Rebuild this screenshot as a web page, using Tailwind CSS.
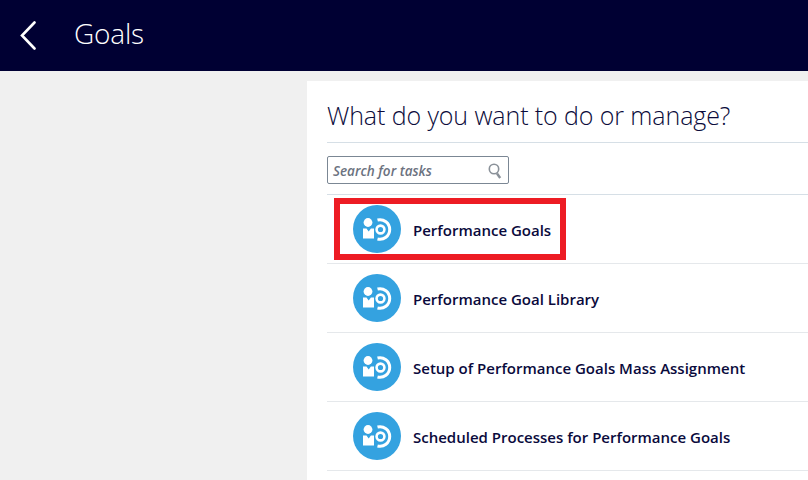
<!DOCTYPE html>
<html lang="en">
<head>
<meta charset="UTF-8">
<title>Goals</title>
<script src="https://cdn.jsdelivr.net/npm/@tailwindcss/browser@4"></script>
</head>
<body class="bg-[#f0f0f0] font-['Open_Sans',sans-serif] w-[808px] h-[480px] overflow-hidden">
  <header class="h-[71px] bg-[#000033] flex items-center text-white">
    <svg class="ml-[20px]" width="16" height="30" viewBox="0 0 16 30" fill="none" stroke="#fff" stroke-width="2.6" stroke-linecap="round"><path d="M14.5 1.5 2 14.5 14.5 27.5"/></svg>
    <h1 class="ml-[38px] mb-[6px] text-[28px] font-light tracking-[-0.2px]">Goals</h1>
  </header>
  <main class="ml-[307px] mt-[10px] bg-white h-[399px] pl-[20px]">
    <h2 class="h-[62px] border-b border-[#d6dfe6] pt-[16px] text-[25px] leading-[36px] font-light text-[#0b0b3b] tracking-[-0.1px]">What do you want to do or manage?</h2>
    <div class="h-[52px] border-b border-[#d6dfe6] pt-[13px]">
      <div class="w-[182px] h-[28px] border border-[#7b8794] rounded-[2px] bg-white flex items-center justify-between pl-[5px] pr-[6px]">
        <span class="mt-[3px] text-[13.5px] italic font-semibold text-[#6b7280]">Search for tasks</span>
        <svg class="mt-[2px]" width="14" height="17" viewBox="0 0 14 17" fill="none"><circle cx="6" cy="6" r="4.7" stroke="#8a9199" stroke-width="1.6"/><path d="M9 10.5l3.2 4.5" stroke="#8a9199" stroke-width="2.4"/></svg>
      </div>
    </div>
    <ul class="relative">
      <li class="h-[69px] border-b border-[#e5e8eb] flex items-center pl-[26px]">
        <svg width="48" height="48" viewBox="0 0 48 48"><circle cx="24" cy="24" r="24" fill="#34a2e0"/><circle cx="27.5" cy="24.5" r="3.9" fill="none" stroke="#fff" stroke-width="2.6"/><path d="M24.5 15a9.8 9.8 0 1 1 0 19" fill="none" stroke="#fff" stroke-width="3"/><circle cx="15" cy="17.5" r="4.4" fill="#fff"/><path d="M10 23.5h3.5l2.2 3 2.2-3H21v10H10z" fill="#fff"/></svg>
        <span class="ml-[12px] mt-[3px] text-[15px] font-semibold text-[#0a0a3c]">Performance Goals</span>
      </li>
      <li class="h-[69px] border-b border-[#e5e8eb] flex items-center pl-[26px]">
        <svg width="48" height="48" viewBox="0 0 48 48"><circle cx="24" cy="24" r="24" fill="#34a2e0"/><circle cx="27.5" cy="24.5" r="3.9" fill="none" stroke="#fff" stroke-width="2.6"/><path d="M24.5 15a9.8 9.8 0 1 1 0 19" fill="none" stroke="#fff" stroke-width="3"/><circle cx="15" cy="17.5" r="4.4" fill="#fff"/><path d="M10 23.5h3.5l2.2 3 2.2-3H21v10H10z" fill="#fff"/></svg>
        <span class="ml-[12px] mt-[3px] text-[15px] font-semibold text-[#0a0a3c]">Performance Goal Library</span>
      </li>
      <li class="h-[69px] border-b border-[#e5e8eb] flex items-center pl-[26px]">
        <svg width="48" height="48" viewBox="0 0 48 48"><circle cx="24" cy="24" r="24" fill="#34a2e0"/><circle cx="27.5" cy="24.5" r="3.9" fill="none" stroke="#fff" stroke-width="2.6"/><path d="M24.5 15a9.8 9.8 0 1 1 0 19" fill="none" stroke="#fff" stroke-width="3"/><circle cx="15" cy="17.5" r="4.4" fill="#fff"/><path d="M10 23.5h3.5l2.2 3 2.2-3H21v10H10z" fill="#fff"/></svg>
        <span class="ml-[12px] mt-[3px] text-[15px] font-semibold text-[#0a0a3c]">Setup of Performance Goals Mass Assignment</span>
      </li>
      <li class="h-[69px] border-b border-[#e5e8eb] flex items-center pl-[26px]">
        <svg width="48" height="48" viewBox="0 0 48 48"><circle cx="24" cy="24" r="24" fill="#34a2e0"/><circle cx="27.5" cy="24.5" r="3.9" fill="none" stroke="#fff" stroke-width="2.6"/><path d="M24.5 15a9.8 9.8 0 1 1 0 19" fill="none" stroke="#fff" stroke-width="3"/><circle cx="15" cy="17.5" r="4.4" fill="#fff"/><path d="M10 23.5h3.5l2.2 3 2.2-3H21v10H10z" fill="#fff"/></svg>
        <span class="ml-[12px] mt-[3px] text-[15px] font-semibold text-[#0a0a3c]">Scheduled Processes for Performance Goals</span>
      </li>
      <div class="absolute left-[7px] top-[3px] w-[232px] h-[62px] border-[6px] border-[#ed1c24]"></div>
    </ul>
  </main>
</body>
</html>
